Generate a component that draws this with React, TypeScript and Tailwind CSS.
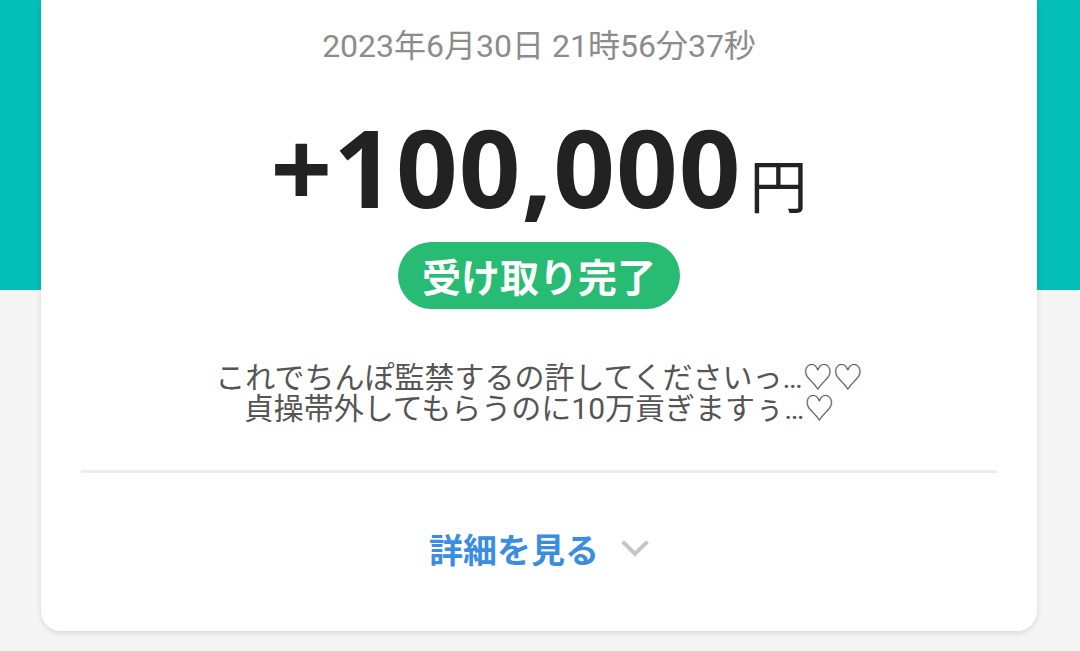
const jp = "font-['Roboto','Noto_Sans_CJK_JP','Noto_Sans',sans-serif]";

const Chevron = () => (
  <svg width="28" height="18" viewBox="0 0 28 18" fill="none">
    <path d="M3 3l11 11L25 3" stroke="#c6c6c6" strokeWidth="4" strokeLinecap="square" />
  </svg>
);

export default function App() {
  return (
    <div className="h-[651px] w-[1080px] overflow-hidden bg-[linear-gradient(to_bottom,#04bfb7_0px,#04bfb7_290px,#f5f5f5_290px)]">
      <div className="ml-[41px] flex w-[996px] flex-col items-center rounded-b-[20px] bg-white px-[40px] pb-[60px] shadow-[0_2px_6px_rgba(0,0,0,0.12)]">
        <p className={`${jp} mt-[28px] text-[32px] leading-[36px] text-[#8c8c8c]`}>
          2023年6月30日 21時56分37秒
        </p>
        <div className="mt-[48px] flex items-baseline">
          <span className="font-['Open_Sans','Noto_Sans',sans-serif] text-[108px] font-bold leading-[110px] tracking-[1px] text-[#222]">
            +100,000
          </span>
          <span className="ml-[8px] font-['Noto_Sans_CJK_JP',sans-serif] text-[58px] leading-none text-[#222]">円</span>
        </div>
        <div className="mt-[20px] flex h-[67px] w-[282px] items-center justify-center rounded-full bg-[#27bb73] font-['Noto_Sans_CJK_JP',sans-serif] text-[39px] font-bold text-white">
          受け取り完了
        </div>
        <p className={`${jp} mt-[53px] text-center text-[30px] leading-[31px] text-[#555]`}>
          これでちんぽ監禁するの許してくださいっ…♡♡
          <br />
          貞操帯外してもらうのに10万貢ぎますぅ…♡
        </p>
        <div className="mt-[46px] h-[3px] w-full bg-[#ececec]" />
        <div className="mt-[54px] flex items-center gap-[22px]">
          <span className="font-['Noto_Sans_CJK_JP',sans-serif] text-[34px] font-bold leading-[44px] text-[#3b8de0]">詳細を見る</span>
          <Chevron />
        </div>
      </div>
    </div>
  );
}
